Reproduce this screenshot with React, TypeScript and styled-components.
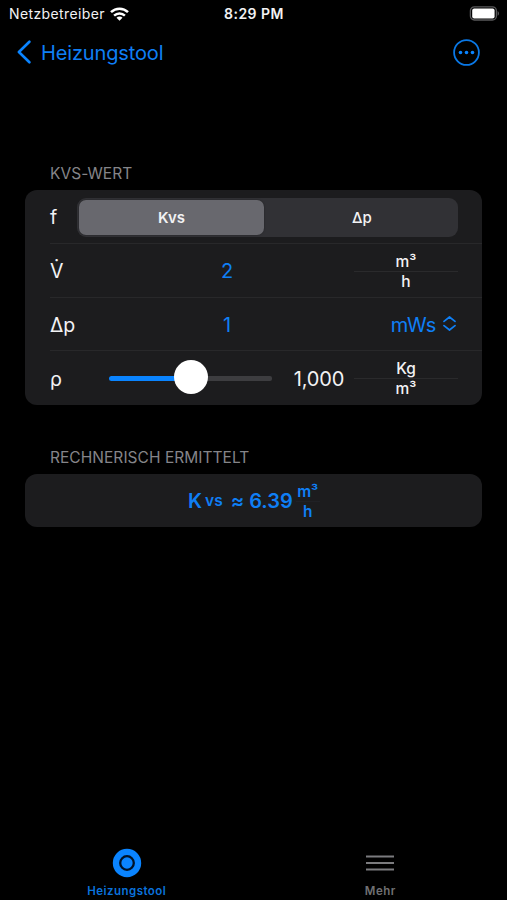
import React, { useState } from "react";
import styled, { createGlobalStyle } from "styled-components";

const BLUE = "#0f7ff5";

const GlobalStyle = createGlobalStyle`
  *, *::before, *::after { box-sizing: border-box; }
  html, body { margin: 0; background: #000; }
  body { font-family: Inter, "Liberation Sans", sans-serif; color: #f2f2f4; overflow: hidden; }
  button { font: inherit; color: inherit; background: none; border: 0; padding: 0; cursor: pointer; }
  svg { display: block; flex: none; }
`;

const Screen = styled.div`
  width: 507px;
  height: 900px;
  overflow: hidden;
  display: flex;
  flex-direction: column;
  background: #000;
`;

const StatusBar = styled.header`
  height: 27px;
  padding: 0 8px 0 9px;
  display: grid;
  grid-template-columns: 1fr auto 1fr;
  align-items: center;
  line-height: 27px;
`;

const Carrier = styled.div`
  display: flex;
  align-items: center;
  gap: 5px;
  font-size: 14px;
  letter-spacing: 0.38px;
`;

const Clock = styled.div`
  font-size: 14px;
  font-weight: 600;
  letter-spacing: 0.5px;
`;

const Battery = styled.div`
  justify-self: end;
`;

const NavBar = styled.nav`
  height: 50px;
  padding: 0 27px 0 17px;
  display: flex;
  align-items: center;
  justify-content: space-between;
  color: ${BLUE};
`;

const BackButton = styled.button`
  display: flex;
  align-items: center;
  gap: 10px;
  font-size: 20px;
  line-height: 24px;
  letter-spacing: -0.14px;

  & > span { padding-top: 2px; }
`;

const Content = styled.main`
  flex: 1;
  padding: 86px 25px 0 25px;
`;

const SectionTitle = styled.h2`
  margin: 0;
  height: 27px;
  padding-left: 25px;
  font-size: 15.5px;
  font-weight: 400;
  line-height: 21px;
  letter-spacing: 0.04px;
  color: #858589;
`;

const Card = styled.section`
  border-radius: 12px;
  background: #1c1c1e;
  margin-bottom: 42px;
`;

const Row = styled.div<{ $last?: boolean }>`
  height: ${(p) => (p.$last ? 53.2 : 53.8)}px;
  margin-left: 25px;
  padding-right: 24px;
  display: flex;
  align-items: center;
  border-bottom: ${(p) => (p.$last ? "0" : "1px solid #28282a")};
`;

const Symbol = styled.span<{ $width: number }>`
  width: ${(p) => p.$width}px;
  flex: none;
  font-size: 19.5px;
  line-height: 24px;
  padding-top: 2px;
`;

const Segmented = styled.div`
  flex: 1;
  height: 39px;
  margin-top: 2px;
  padding: 2px;
  display: grid;
  grid-template-columns: 185px 1fr;
  border-radius: 9px;
  background: #313135;
`;

const Segment = styled.button<{ $active: boolean }>`
  border-radius: 7px;
  background: ${(p) => (p.$active ? "#68686e" : "transparent")};
  box-shadow: ${(p) => (p.$active ? "0 0 2px rgba(0, 0, 0, 0.35)" : "none")};
  font-size: 15px;
  font-weight: ${(p) => (p.$active ? 600 : 500)};

  &:last-child { padding-left: 4px; }
`;

const Value = styled.span`
  width: 102px;
  flex: none;
  text-align: center;
  font-size: 20px;
  line-height: 24px;
  padding-top: 2px;
  color: ${BLUE};
`;

const Density = styled.span`
  width: 64px;
  margin-left: 15px;
  text-align: center;
  font-size: 20px;
  letter-spacing: -0.1px;
  line-height: 24px;
  padding-top: 2px;
`;

const Fraction = styled.span<{ $width: number; $line: string; $weight?: number }>`
  width: ${(p) => p.$width}px;
  margin-left: auto;
  display: grid;
  grid-template-rows: 20px 20px;
  justify-items: center;
  font-size: 15.5px;
  font-weight: ${(p) => p.$weight ?? 500};
  line-height: 20px;
  padding-top: 3px;

  & > span:first-child {
    width: 100%;
    text-align: center;
    border-bottom: 1px solid ${(p) => p.$line};
  }
  & > span:last-child { line-height: 20px; }
`;

const UnitPicker = styled.button`
  margin-left: auto;
  display: flex;
  align-items: center;
  gap: 7px;
  padding-right: 2px;
  font-size: 20px;
  line-height: 24px;
  letter-spacing: -0.3px;
  color: ${BLUE};

  & > span { padding-top: 2px; }
`;

const Slider = styled.div`
  width: 163px;
  height: 34px;
  flex: none;
  display: flex;
  align-items: center;
`;

const Track = styled.span<{ $filled?: boolean }>`
  height: 5px;
  flex: ${(p) => (p.$filled ? "0 0 66px" : "1")};
  margin-top: 2px;
  border-radius: ${(p) => (p.$filled ? "3px 0 0 3px" : "0 2px 2px 0")};
  background: ${(p) => (p.$filled ? "#0a84ff" : "#3d3d40")};
`;

const Thumb = styled.span`
  width: 34px;
  height: 34px;
  flex: none;
  border-radius: 50%;
  background: #fff;
  margin: -1px -1px 0;
  z-index: 1;
`;

const Result = styled.div`
  height: 53.5px;
  padding-left: 163px;
  display: flex;
  align-items: center;
  font-size: 20px;
  line-height: 24px;
  font-weight: 600;
  color: ${BLUE};

  & > ${Fraction} { margin-left: 3px; }
`;

const ResultPart = styled.span<{ $gap?: number; $small?: boolean }>`
  margin-left: ${(p) => p.$gap ?? 0}px;
  padding-top: 2px;
  font-size: ${(p) => (p.$small ? 15.5 : 20)}px;
`;

const TabBar = styled.footer`
  height: 55px;
  flex: none;
  display: grid;
  grid-template-columns: 1fr 1fr;
`;

const Tab = styled.button<{ $active?: boolean }>`
  display: flex;
  flex-direction: column;
  align-items: center;
  gap: 5px;
  padding-top: 3px;
  font-size: 11.5px;
  font-weight: 600;
  line-height: 17px;
  letter-spacing: 0.45px;
  color: ${(p) => (p.$active ? "#0a72dc" : "#707073")};
`;

const WifiIcon = () => (
  <svg width="19" height="14" viewBox="0 0 19 14" fill="none" stroke="#fff" strokeWidth="2.5">
    <path d="M1 5.2a12.2 12.2 0 0 1 17 0" />
    <path d="M4.1 8.6a7.8 7.8 0 0 1 10.8 0" />
    <path d="M6.5 10.8a4.2 4.2 0 0 1 6 0L9.5 13.8z" fill="#fff" stroke="none" />
  </svg>
);

const BatteryIcon = () => (
  <svg width="30" height="15" viewBox="0 0 30 15">
    <rect x="1.4" y="0.8" width="26" height="13.2" rx="4" fill="none" stroke="#59595b" strokeWidth="1.3" />
    <rect x="3.2" y="2.4" width="22.4" height="10" rx="2" fill="#fff" />
    <path d="M28.6 5q1.4.7 1.4 2.4t-1.4 2.4z" fill="#59595b" />
  </svg>
);

const ChevronIcon = () => (
  <svg width="14" height="24" viewBox="0 0 14 24" fill="none" stroke="#0a84ff" strokeWidth="2.6" strokeLinecap="round" strokeLinejoin="round">
    <path d="M12.4 1.7 1.9 12l10.5 10.3" />
  </svg>
);

const MoreIcon = () => (
  <svg width="27" height="27" viewBox="0 0 27 27">
    <circle cx="13.5" cy="13.5" r="12.4" fill="none" stroke="#0a78e6" strokeWidth="1.8" />
    <g fill="#0a84ff">
      <circle cx="7.5" cy="13.5" r="1.8" />
      <circle cx="13.5" cy="13.5" r="1.8" />
      <circle cx="19.5" cy="13.5" r="1.8" />
    </g>
  </svg>
);

const UpDownIcon = () => (
  <svg width="13" height="15" viewBox="0 0 13 15" fill="none" stroke={BLUE} strokeWidth="1.7" strokeLinecap="round" strokeLinejoin="round">
    <path d="M1 5.4 6.5 1 12 5.4M1 9.6 6.5 14 12 9.6" />
  </svg>
);

const TargetIcon = () => (
  <svg width="30" height="30" viewBox="0 0 30 30">
    <circle cx="15" cy="15" r="14.2" fill="#0a84ff" />
    <circle cx="15" cy="15" r="6.8" fill="none" stroke="#001226" strokeWidth="2.3" />
  </svg>
);

const MenuIcon = () => (
  <svg width="30" height="30" viewBox="0 0 30 30" fill="none" stroke="#7b7b7e" strokeWidth="2.2">
    <path d="M1 8.5h28M1 15h28M1 21.5h28" />
  </svg>
);

export default function App() {
  const [mode, setMode] = useState("Kvs");
  return (
    <Screen>
      <GlobalStyle />
      <StatusBar>
        <Carrier>Netzbetreiber <WifiIcon /></Carrier>
        <Clock>8:29 PM</Clock>
        <Battery><BatteryIcon /></Battery>
      </StatusBar>
      <NavBar>
        <BackButton><ChevronIcon /><span>Heizungstool</span></BackButton>
        <button><MoreIcon /></button>
      </NavBar>
      <Content>
        <SectionTitle>KVS-WERT</SectionTitle>
        <Card>
          <Row>
            <Symbol $width={27}>f</Symbol>
            <Segmented>
              {["Kvs", "Δp"].map((m) => (
                <Segment key={m} $active={mode === m} onClick={() => setMode(m)}>{m}</Segment>
              ))}
            </Segmented>
          </Row>
          <Row>
            <Symbol $width={126}>V̇</Symbol>
            <Value>2</Value>
            <Fraction $width={104} $line="#2a2a2c"><span>m³</span><span>h</span></Fraction>
          </Row>
          <Row>
            <Symbol $width={126}>Δp</Symbol>
            <Value>1</Value>
            <UnitPicker><span>mWs</span><UpDownIcon /></UnitPicker>
          </Row>
          <Row $last>
            <Symbol $width={59}>ρ</Symbol>
            <Slider><Track $filled /><Thumb /><Track /></Slider>
            <Density>1,000</Density>
            <Fraction $width={104} $line="#2a2a2c"><span>Kg</span><span>m³</span></Fraction>
          </Row>
        </Card>
        <SectionTitle>RECHNERISCH ERMITTELT</SectionTitle>
        <Card>
          <Result>
            <ResultPart>K</ResultPart>
            <ResultPart $gap={3} $small>vs</ResultPart>
            <ResultPart $gap={8}>≈</ResultPart>
            <ResultPart $gap={5}>6.39</ResultPart>
            <Fraction $width={24} $line="#202125" $weight={600}><span>m³</span><span>h</span></Fraction>
          </Result>
        </Card>
      </Content>
      <TabBar>
        <Tab $active><TargetIcon />Heizungstool</Tab>
        <Tab><MenuIcon />Mehr</Tab>
      </TabBar>
    </Screen>
  );
}
